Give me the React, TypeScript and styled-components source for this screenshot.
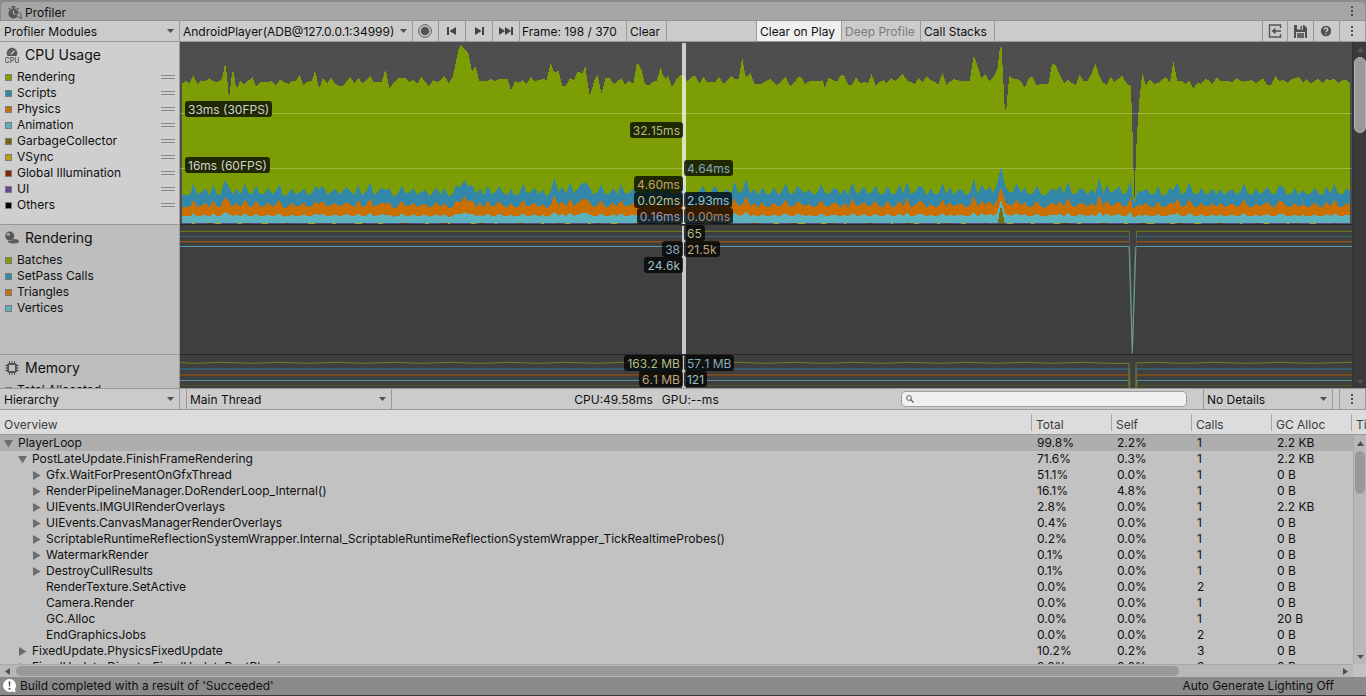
import React from "react";
import styled, { createGlobalStyle } from "styled-components";

const Page = createGlobalStyle`
  *, *::before, *::after { box-sizing: border-box; }
  body { margin: 0; background: #8a8a8a; overflow: hidden; }
  body, button, input, select, table {
    font-family: Inter, "Liberation Sans", sans-serif;
    font-size: 12px;
    line-height: 16px;
    color: #101010;
  }
`;

const Shell = styled.div`
  display: flex;
  flex-direction: column;
  height: 100vh;
  min-height: 480px;
  padding-top: 2px;
  background: #8a8a8a;
`;

const TabBar = styled.header`
  display: flex;
  align-items: center;
  justify-content: space-between;
  height: 19px;
  flex: none;
  margin: 0 1px;
  padding: 0 1px 0 7px;
  background: #a5a5a5;
  border-bottom: 1px solid #919191;
  border-radius: 4px 4px 0 0;
`;

const TabTitle = styled.h1`
  display: flex;
  align-items: center;
  gap: 3px;
  margin: 0;
  padding-top: 3px;
  font-size: 12px;
  font-weight: 400;
`;

const Toolbar = styled.div`
  display: flex;
  flex: none;
  height: 21px;
  background: #cbcbcb;
  border-bottom: 1px solid #999;
`;

const PickerFrame = styled.div<{ $width: number }>`
  display: grid;
  align-items: center;
  flex: none;
  width: ${(p) => p.$width}px;
  border-right: 1px solid #999;
  > * { grid-area: 1 / 1; }
  > svg { justify-self: end; margin-right: 5px; pointer-events: none; }
`;

const Select = styled.select`
  appearance: none;
  width: 100%;
  height: 20px;
  margin: 0;
  padding: 1px 0 0 4px;
  border: 0;
  border-radius: 0;
  background: transparent;
`;

const Picker = styled(Select)<{ $tight?: boolean }>`
  padding-left: ${(p) => (p.$tight ? 3 : 4)}px;
`;

const ToolButton = styled.button<{ $width: number; $on?: boolean; $icon?: boolean }>`
  display: flex;
  align-items: center;
  justify-content: ${(p) => (p.$icon ? "center" : "flex-start")};
  flex: none;
  width: ${(p) => p.$width}px;
  margin: 0;
  padding: ${(p) => (p.$icon ? "0 1px 0 0" : "1px 0 0 3px")};
  border: 0;
  border-right: 1px solid #999;
  background: ${(p) => (p.$on ? "#efefef" : "transparent")};
  white-space: nowrap;
  &:disabled { color: #7b7b7b; }
`;

const FrameCounter = styled.span`
  flex: none;
  width: 107px;
  padding: 3px 0 0 2px;
  border-right: 1px solid #999;
  white-space: nowrap;
`;

const Gap = styled.div<{ $width?: number }>`
  flex: ${(p) => (p.$width ? `0 0 ${p.$width}px` : "1 1 0")};
  border-right: 1px solid #999;
`;

const Modules = styled.main`
  display: flex;
  flex: none;
  height: 347px;
  overflow: hidden;
  background: #3f3f3f;
  border-bottom: 1px solid #999;
`;

const ModuleList = styled.div`
  flex: 1;
  min-width: 0;
`;

const ModuleRow = styled.section<{ $height: number }>`
  display: flex;
  height: ${(p) => p.$height}px;
`;

const Legend = styled.div<{ $selected?: boolean }>`
  flex: none;
  width: 180px;
  overflow: hidden;
  background: ${(p) => (p.$selected ? "#cfcfcf" : "#bebebe")};
  border-right: 1px solid #999;
  border-bottom: 1px solid #999;
`;

const LegendTitle = styled.h2`
  display: flex;
  align-items: center;
  gap: 6px;
  height: 27px;
  margin: 0;
  padding: 0 0 2px 5px;
  font-size: 14px;
  font-weight: 400;
`;

const LegendItems = styled.ul`
  margin: 0;
  padding: 0;
  list-style: none;
`;

const LegendItem = styled.li`
  display: flex;
  align-items: center;
  gap: 5px;
  height: 16px;
  padding: 0 4px 0 5px;
`;

const Swatch = styled.span<{ $color: string }>`
  width: 7px;
  height: 7px;
  background: ${(p) => p.$color};
  border: 1px solid #7a7a7a;
`;

const Handle = styled.span`
  width: 14px;
  height: 4px;
  margin-left: auto;
  border: solid #858585;
  border-width: 1px 0;
`;

const Chart = styled.div<{ $bright?: boolean }>`
  position: relative;
  flex: 1;
  min-width: 0;
  background: ${(p) => (p.$bright ? "#4e4e4e" : "#3f3f3f")};
  border-bottom: 1px solid #262626;
  > svg { display: block; width: 100%; height: 100%; }
`;

const ChartLabel = styled.span<{ $top: number }>`
  position: absolute;
  top: ${(p) => p.$top}px;
  padding: 1px 3px 0;
  border-radius: 3px;
  background: rgba(0, 0, 0, 0.75);
  line-height: 15px;
  font-kerning: none;
  white-space: nowrap;
`;

const GuideLabel = styled(ChartLabel)`
  left: 5px;
  color: #d2d2d2;
`;

const ValueLabel = styled(ChartLabel)<{ $side: "left" | "right"; $color: string }>`
  ${(p) => (p.$side === "left" ? "right: calc(57% + 1px);" : "left: 43%;")}
  color: ${(p) => p.$color};
`;

const VScroll = styled.div<{ $dark?: boolean }>`
  display: flex;
  flex-direction: column;
  align-items: center;
  flex: none;
  width: ${(p) => (p.$dark ? 14 : 13)}px;
  padding: ${(p) => (p.$dark ? "5px 0 4px 1px" : "6px 0 5px")};
  background: ${(p) => (p.$dark ? "#3a3a3a" : "#b8b8b8")};
  border-left: 1px solid ${(p) => (p.$dark ? "#333" : "#a8a8a8")};
  > svg:last-child { margin-top: auto; }
`;

const Thumb = styled.div<{ $length: number; $dark?: boolean }>`
  flex: none;
  width: ${(p) => (p.$dark ? 12 : 10)}px;
  height: ${(p) => p.$length}px;
  margin-top: 5px;
  border-radius: 6px;
  background: #999;
  border: ${(p) => (p.$dark ? "1px solid #b5b5b5" : "0")};
`;

const Stats = styled.div`
  display: flex;
  justify-content: center;
  gap: 9px;
  flex: 1;
  padding-top: 3px;
`;

const SearchBox = styled.label`
  display: flex;
  align-items: center;
  gap: 3px;
  width: 286px;
  height: 16px;
  margin: 2px 16px 0 0;
  padding: 0 4px;
  border: 1px solid #a0a0a0;
  border-radius: 4px;
  background: #f0f0f0;
`;

const SearchInput = styled.input`
  flex: 1;
  min-width: 0;
  height: 13px;
  padding: 0;
  border: 0;
  outline: 0;
  background: transparent;
`;

const TreeArea = styled.div`
  display: grid;
  grid-template: 25px minmax(0, 1fr) / minmax(0, 1fr) 13px;
  flex: 1;
  min-height: 0;
  overflow: hidden;
  background: #c2c2c2;
  > table { grid-area: 1 / 1 / 3 / 3; align-self: start; }
  > div { grid-area: 2 / 2; }
`;

const Table = styled.table`
  width: 100%;
  table-layout: fixed;
  border-collapse: separate;
  border-spacing: 0;
`;

const Col = styled.col<{ $width?: number }>`
  width: ${(p) => (p.$width ? `${p.$width}px` : "auto")};
`;

const HeadCell = styled.th`
  height: 25px;
  padding: 4px 0 3px;
  background: #dcdcdc;
  border-bottom: 1px solid #999;
  color: #3c3c3c;
  font-weight: 400;
  text-align: left;
  overflow: hidden;
`;

const HeadText = styled.div<{ $first?: boolean }>`
  height: 17px;
  padding-left: 4px;
  border-left: ${(p) => (p.$first ? "0" : "1px solid #a8a8a8")};
  line-height: 22px;
`;

const Row = styled.tr<{ $selected?: boolean }>`
  height: 16px;
  background: ${(p) => (p.$selected ? "#aeaeae" : "transparent")};
`;

const Cell = styled.td`
  height: 16px;
  padding: 0 0 0 6px;
  white-space: nowrap;
`;

const NameCell = styled.td<{ $level: number }>`
  height: 16px;
  padding: 0 0 0 ${(p) => 4 + p.$level * 14}px;
  white-space: nowrap;
`;

const NameLine = styled.div`
  display: flex;
  align-items: center;
  height: 16px;
`;

const Toggle = styled.button`
  display: flex;
  align-items: center;
  width: 14px;
  height: 14px;
  padding: 0;
  border: 0;
  background: transparent;
`;

const Leaf = styled.span`
  width: 14px;
`;

const HScroll = styled.div`
  display: flex;
  align-items: center;
  flex: none;
  height: 13px;
  margin-right: 13px;
  padding: 0 5px;
  background: #b8b8b8;
  border-top: 1px solid #a8a8a8;
`;

const HScrollRow = styled.div`
  flex: none;
  background: #c2c2c2;
`;

const HTrack = styled.div`
  flex: 1;
  margin: 0 5px 0 6px;
`;

const HThumb = styled.div`
  width: 88%;
  height: 10px;
  border-radius: 5px;
  background: #999;
`;

const StatusBar = styled.footer`
  display: flex;
  align-items: center;
  gap: 4px;
  flex: none;
  height: 19px;
  padding: 0 32px 0 3px;
  background: #8a8a8a;
  border-bottom: 1px solid #3a3a3a;
`;

const StatusRight = styled.span`
  margin-left: auto;
`;

/* ---------- icons ---------- */

const DownArrow = ({ color = "#505050" }: { color?: string }) => (
  <svg width="7" height="4" viewBox="0 0 7 4"><path d="M0 0h7L3.5 4z" fill={color} /></svg>
);
const UpArrow = ({ color = "#505050" }: { color?: string }) => (
  <svg width="7" height="5" viewBox="0 0 7 5"><path d="M0 5h7L3.5 0z" fill={color} /></svg>
);
const SideArrow = ({ flip }: { flip?: boolean }) => (
  <svg width="5" height="7" viewBox="0 0 5 7"><path d={flip ? "M5 0v7L0 3.5z" : "M0 0v7l5-3.5z"} fill="#505050" /></svg>
);
const Kebab = () => (
  <svg width="24" height="12" viewBox="0 0 24 12" fill="#4c4c4c">
    <rect x="11" y="1" width="2" height="2" /><rect x="11" y="5" width="2" height="2" /><rect x="11" y="9" width="2" height="2" />
  </svg>
);
const StopwatchIcon = () => (
  <svg width="14" height="14" viewBox="0 0 14 14" fill="none">
    <circle cx="5.5" cy="7.5" r="5" fill="#555" />
    <path d="M3.500 .7h4M5.500 .7v3M9 2l1.500 1.500M2 2L.8 3.200" stroke="#555" strokeWidth="1.500" />
    <path d="M5.500 4.200V7.500l1.800 1.400" stroke="#b0b0b0" strokeWidth="1.200" />
    <circle cx="11" cy="9" r="2.300" fill="#a5a5a5" stroke="#666" />
    <path d="M12.500 10.800l1.500 2" stroke="#555" strokeWidth="1.200" />
  </svg>
);
const CpuIcon = () => (
  <svg width="14" height="16" viewBox="0 0 14 16">
    <path d="M2.600 9A5.200 5.200 0 1 1 11.400 9z" fill="#555" />
    <path d="M6 7.400L9.500 3.600" stroke="#ddd" strokeWidth="1.300" />
    <path d="M4 4.900h.8M6.500 2.900h.8M3.500 6.900h.8" stroke="#bbb" />
    <text x="7" y="15.500" textAnchor="middle" fontSize="7" fontWeight="600" fill="#555">CPU</text>
  </svg>
);
const SphereIcon = () => (
  <svg width="14" height="13" viewBox="0 0 14 13">
    <ellipse cx="8.500" cy="10.300" rx="5.300" ry="2.200" fill="#5b5b5b" />
    <circle cx="4.700" cy="5" r="4.700" fill="#555" stroke="#bebebe" strokeWidth=".5" />
    <circle cx="3.400" cy="3.400" r="1.700" fill="#a5a5a5" />
  </svg>
);
const ChipIcon = () => (
  <svg width="14" height="14" viewBox="0 0 14 14" fill="none" stroke="#555">
    <rect x="3" y="3" width="8" height="8" rx="1" strokeWidth="2" />
    <path d="M4.500 0v2M7 0v2M9.500 0v2M4.500 12v2M7 12v2M9.500 12v2M0 4.500h2M0 7h2M0 9.500h2M12 4.500h2M12 7h2M12 9.500h2" />
  </svg>
);
const RecordIcon = () => (
  <svg width="14" height="14" viewBox="0 0 14 14"><circle cx="7" cy="7" r="6.300" fill="none" stroke="#555" /><circle cx="7" cy="7" r="4.300" fill="#555" /></svg>
);
const PrevIcon = () => (
  <svg width="10" height="8" viewBox="0 0 10 8" fill="#444"><path d="M0 0h2v8H0zM9 0v8L2.500 4z" /></svg>
);
const NextIcon = () => (
  <svg width="10" height="8" viewBox="0 0 10 8" fill="#444"><path d="M8 0h2v8H8zM1 0v8l6.500-4z" /></svg>
);
const LastIcon = () => (
  <svg width="14" height="8" viewBox="0 0 14 8" fill="#444"><path d="M12 0h2v8h-2zM0 0v8l6-4zM6 0v8l6-4z" /></svg>
);
const LoadIcon = () => (
  <svg width="14" height="14" viewBox="0 0 14 14" fill="none" stroke="#555">
    <path d="M12.500 4V1H1.500v12h11v-3" strokeWidth="1.400" />
    <path d="M5 7h8" strokeWidth="1.600" /><path d="M7.500 3.500v7L3.500 7z" fill="#555" stroke="none" />
  </svg>
);
const SaveIcon = () => (
  <svg width="13" height="13" viewBox="0 0 13 13">
    <path d="M0 0h10l3 3v10H0z" fill="#505050" /><path d="M3 0h6v4.500H3z" fill="#cbcbcb" /><path d="M6.500 1h1.500v3H6.500z" fill="#505050" />
    <path d="M2 7h9v6H2z" fill="#cbcbcb" /><path d="M3 8h7v5H3z" fill="#666" />
  </svg>
);
const HelpIcon = () => (
  <svg width="12" height="12" viewBox="0 0 12 12">
    <circle cx="6" cy="6" r="5.200" fill="#505050" />
    <path d="M4.200 4.700c0-2.300 3.600-2.300 3.600 0C7.800 5.900 6 5.900 6 7.300M6 8.300v1.200" fill="none" stroke="#cbcbcb" strokeWidth="1.300" />
  </svg>
);
const SearchIcon = () => (
  <svg width="8" height="8" viewBox="0 0 8 8" fill="none" stroke="#666"><circle cx="3" cy="3" r="2.400" /><path d="M4.800 4.800L7.600 7.600" strokeWidth="1.300" /></svg>
);
const Expander = ({ open }: { open?: boolean }) => (
  <svg width="9" height="9" viewBox="0 0 9 9"><path d={open ? "M0 1h9L4.500 8.500z" : "M1 0v9l7.500-4.500z"} fill="#6c6c6c" /></svg>
);
const InfoBubble = () => (
  <svg width="13" height="14" viewBox="0 0 13 14">
    <circle cx="6.500" cy="6.500" r="6.500" fill="#fff" />
    <path d="M8 12l4.500 1.500-.6-4z" fill="#fff" />
    <path d="M5.600 2.400h1.800l-.4 5.200h-1z" fill="#444" /><circle cx="6.500" cy="9.800" r="1" fill="#444" />
  </svg>
);

/* ---------- chart data: three recorded spans, each with its own start ---------- */

type Point = [number, number];
const spans = (...parts: [number, string][]): Point[] =>
  parts.flatMap(([start, text]) =>
    text.trim().split(/\s+/).map((pair): Point => {
      const [x, y] = pair.split(",").map(Number);
      return [x + start, y];
    })
  );

const renderingTrace = spans(
  [0, `6,131 18,123 28,129 40,108 52,132 64,121 75,125 88,114 99,124 112,125 124,119 130,100 133,78 138,78 146,164 149,164
    156,96 161,96 168,140 173,140 181,122 192,132 205,122 217,111 229,140 240,126 264,126 274,123 289,136 300,118 315,128
    325,131 336,123 347,123 359,105 370,137 380,125 395,124 400,110 404,95 408,100 413,130 418,143 429,114 442,129 453,113
    465,130 475,137 488,137 500,124 511,111 523,129 535,114 547,129 558,122 570,107 580,125 605,125 610,110 615,91 619,98
    628,146 640,130 656,114 675,114 688,125 700,120 712,131 724,110 735,125 746,138 760,121 770,126 782,120 794,108 806,130
    817,112 825,80 834,35 842,14 865,38 876,96 886,78 890,90 898,123 922,123 934,117 946,123 958,117 983,117 993,152
    1005,123 1016,129 1028,120 1040,132 1052,110 1064,123 1088,117 1100,120 1106,95 1112,69 1122,98 1135,92 1147,138 1157,138
    1170,114 1182,120 1192,96`],
  [1140, `56,96 68,100 76,76 80,110 88,161 92,160 103,120 113,105 124,161 128,150 136,114 150,114 160,131 170,126 184,114
    194,133 207,123 220,132 230,72 235,72 243,85 255,132 265,137 278,125 290,123 302,82 307,100 316,117 324,107 336,142
    348,120 362,105 372,108 382,125 396,108 406,108 418,131 430,111 442,126 466,126 477,110 489,131 500,123 513,108 524,116
    536,116 547,52 552,85 558,111 571,99 583,131 604,131 618,123 630,116 650,135 664,125 677,110 690,138 700,131 714,112
    724,112 736,132 748,123 782,123 788,120 794,144 806,114 820,120 831,125 843,105 853,108 866,137 876,135 888,111 902,131
    912,126 924,129 935,102 947,137 958,125 971,121 981,129 993,114 1006,123 1028,102 1042,122 1052,126 1064,132 1076,114
    1088,126 1100,108 1113,120 1124,126 1135,132`],
  [2280, `8,99 19,135 40,117 55,121 64,123 89,123 100,52 105,56 124,114 136,102 148,123 158,114 172,90 180,21 185,24 194,200
    198,218 202,170 208,108 220,117 232,117 243,123 254,143 266,117 272,111 278,111 290,137 300,132 325,132 336,72 346,75
    360,104 372,129 384,119 396,129 407,134 419,105 430,122 443,123 455,100 466,70 477,104 488,126 500,135 512,111 523,125
    536,116 547,106 559,129 572,138 576,220 583,485 586,404 590,300 598,180 607,99 618,137 630,117 643,132 655,128 677,111
    690,128 700,63 712,123 724,123 736,131 748,122 760,146 772,128 783,132 796,116 806,120 818,131 831,111 842,123 866,123
    877,128 889,114 901,122 914,125 935,120 948,129 969,115 982,135 993,135 1006,108 1018,123 1030,120 1042,128 1056,117
    1077,111 1090,128 1100,117 1113,130 1135,116 1147,129 1160,117 1170,120 1183,116 1195,130 1208,119 1218,120 1230,129`]
);

const scriptsTrace = spans(
  [0, `6,465 30,465 40,431 52,463 64,458 76,445 88,466 100,435 112,465 122,463 134,420 146,438 158,463 170,445 182,463
    194,431 208,463 216,462 229,438 240,461 252,462 264,443 278,463 290,448 298,433 312,470 325,461 336,445 348,464 358,458
    372,445 383,466 395,460 407,438 417,450 429,437 442,463 453,456 465,444 478,463 500,442 523,465 535,433 546,465 558,456
    571,426 582,465 606,443 618,450 629,445 640,470 652,463 665,437 677,460 688,457 700,443 712,465 735,449 748,468 770,443
    781,465 794,443 806,470 817,463 829,435 841,443 853,420 865,440 876,433 889,463 900,445 912,467 922,436 936,462 946,457
    958,437 970,460 982,465 994,447 1005,467 1017,463 1029,431 1041,461 1052,457 1064,444 1076,463 1088,450 1100,470
    1112,455 1123,413 1135,456 1147,440 1159,462 1170,426 1182,460`],
  [1140, `60,438 66,430 82,430 100,463 112,458 124,433 135,463 148,461 160,443 172,462 183,432 195,461 207,460 219,446 230,455
    250,463 262,445 275,465 290,440 305,465 320,445 335,463 350,460 363,455 372,430 380,462 406,458 419,452 430,438 440,461
    453,455 466,438 478,461 490,455 500,446 513,463 524,423 536,460 547,450 559,417 571,461 583,446 595,466 607,442 618,462
    630,463 642,443 655,464 665,455 677,431 690,464 701,458 713,438 735,460 748,448 760,465 772,458 783,432 796,460 806,463
    818,445 831,447 841,467 853,445 865,466 877,427 890,461 900,456 912,438 924,462 935,456 947,437 960,465 971,461 983,437
    995,463 1006,461 1019,435 1030,461 1041,424 1053,463 1065,455 1077,437 1089,443 1100,467 1113,446 1124,463 1136,460`],
  [2280, `8,431 19,463 30,442 42,464 53,452 66,447 77,465 90,458 101,414 113,463 125,434 136,455 149,438 160,459 172,430
    183,376 196,440 208,455 218,457 230,430 243,457 253,442 266,464 278,461 290,436 302,461 314,468 337,443 348,455 360,437
    372,462 384,424 396,461 408,463 419,443 431,450 444,463 455,445 466,461 478,414 490,461 501,433 513,460 525,450 537,438
    549,464 560,458 572,420 578,470 583,487 590,462 597,451 607,458 619,444 632,463 643,463 654,438 665,466 677,464 690,443
    700,452 712,427 725,463 737,456 748,425 760,460 772,464 784,443 796,462 807,460 818,446 830,463 842,446 854,466 870,450
    880,450 890,465 901,455 912,430 924,462 936,464 948,446 960,463 970,452 983,441 995,463 1006,461 1019,433 1030,442
    1041,464 1053,462 1064,444 1076,464 1088,449 1101,463 1112,461 1124,443 1136,461 1147,465 1160,441 1172,461 1183,432
    1195,461 1207,464 1219,445 1230,455`]
);

/* The lower layers rise and fall with the scripts layer, each more gently. */
const follow = (base: number, gain: number): Point[] =>
  scriptsTrace.map(([x, y]) => [x, Math.min(base + 3, base - (465 - y) * gain)]);
const physicsTrace = follow(502, 0.68);
const animationTrace = follow(529, 0.27);

const area = (points: Point[]) => `M6 549 ${points.map(([x, y]) => `L${x} ${y}`).join(" ")} L3510 549Z`;

const flecks = Array.from({ length: 150 }, (_, i) => ({
  x: 12 + i * 23.3,
  width: 6 + ((i * 37) % 17),
  color: i % 5 === 3 ? "#7a3418" : i % 3 === 1 ? "#b39b12" : "#5f4a80",
}));

const CpuChart = () => (
  <svg viewBox="0 6 3516 546" preserveAspectRatio="none" shapeRendering="crispEdges">
    <path d={area(renderingTrace)} fill="#7c9e04" />
    <path d={area(scriptsTrace)} fill="#3387a8" />
    <path d={area(physicsTrace)} fill="#ca6f02" />
    <path d={area(animationTrace)} fill="#5bb1bc" />
    <path d="M2448 530L2463 478L2478 530Z" fill="#5bb1bc" />
    <path d="M2454 549L2460 505H2466L2474 549Z" fill="#73700e" />
    <rect x="6" y="549" width="3504" height="3" fill="#5f4a80" />
    {flecks.map((f) => <rect key={f.x} x={f.x} y="549" width={f.width} height="3" fill={f.color} />)}
    <rect x="0" y="219" width="3516" height="3" fill="#fff" opacity=".25" />
    <rect x="0" y="384" width="3516" height="3" fill="#fff" opacity=".25" />
    <rect x="1506" y="9" width="12" height="543" fill="#fff" opacity=".72" />
  </svg>
);

const lineWithDip = (y: number, floor: number) => `M0 ${y}H2848.500V${floor}M2869.500 ${floor}V${y}H3516`;

const RenderingChart = () => (
  <svg viewBox="0 555 3516 387" preserveAspectRatio="none" fill="none" strokeWidth="3">
    <path d={lineWithDip(571.5, 600)} stroke="#474b34" />
    <path d={lineWithDip(574.5, 600)} stroke="#64761f" />
    <path d={lineWithDip(589.5, 610)} stroke="#34677b" />
    <path d={lineWithDip(604.5, 620)} stroke="#8a541c" />
    <path d={lineWithDip(607.5, 620)} stroke="#5f482f" />
    <path d="M0 619.500H2847L2857 940L2868 619.500H3516" stroke="#569ba2" />
    <path d="M2849 620L2857 930L2866 620" stroke="#7d9c72" strokeWidth="3" opacity=".7" />
    <rect x="1506" y="558" width="12" height="384" fill="#c8c8c8" />
  </svg>
);

const MemoryChart = () => (
  <svg viewBox="0 945 3516 99" preserveAspectRatio="none" fill="none" strokeWidth="3">
    <path d={lineWithDip(987, 1044)} stroke="#365c6e" strokeWidth="6" />
    <path d={lineWithDip(1005, 1044)} stroke="#75491f" strokeWidth="6" />
    <path d={lineWithDip(1021.5, 1044)} stroke="#4f929a" />
    <path d={lineWithDip(1036.5, 1044)} stroke="#57501f" />
    <path
      d={`M0 967 ${Array.from({ length: 33 }, (_, i) => `L${40 + i * 86} ${i % 2 ? 967 : 970}`).join(" ")} L2847 970V1044M2868 1044V969 L2930 967L3010 970L3100 967L3200 970L3300 967L3400 970L3516 967`}
      stroke="#6a8220"
    />
    <rect x="1506" y="948" width="12" height="96" fill="#c8c8c8" />
  </svg>
);

/* ---------- content ---------- */

const cpuLegend: [string, string][] = [
  ["Rendering", "#7c9e04"], ["Scripts", "#3387a8"], ["Physics", "#ca6f02"], ["Animation", "#5bb1bc"],
  ["GarbageCollector", "#73690c"], ["VSync", "#bfa004"], ["Global Illumination", "#8c2506"], ["UI", "#644790"], ["Others", "#000"],
];
const renderingLegend: [string, string][] = [
  ["Batches", "#7c9e04"], ["SetPass Calls", "#3387a8"], ["Triangles", "#ca6f02"], ["Vertices", "#5bb1bc"],
];
const memoryLegend: [string, string][] = [["Total Allocated", "#7c9e04"]];

const green = "#b2be84", blue = "#86a9ba", orange = "#c6a278", yellow = "#c9c082", cyan = "#9dc2c7", purple = "#a496b4", red = "#b48570";

type Sample = { name: string; level: number; state?: "open" | "closed"; total: string; self: string; calls: number; alloc: string };
const samples: Sample[] = [
  { name: "PlayerLoop", level: 0, state: "open", total: "99.8%", self: "2.2%", calls: 1, alloc: "2.2 KB" },
  { name: "PostLateUpdate.FinishFrameRendering", level: 1, state: "open", total: "71.6%", self: "0.3%", calls: 1, alloc: "2.2 KB" },
  { name: "Gfx.WaitForPresentOnGfxThread", level: 2, state: "closed", total: "51.1%", self: "0.0%", calls: 1, alloc: "0 B" },
  { name: "RenderPipelineManager.DoRenderLoop_Internal()", level: 2, state: "closed", total: "16.1%", self: "4.8%", calls: 1, alloc: "0 B" },
  { name: "UIEvents.IMGUIRenderOverlays", level: 2, state: "closed", total: "2.8%", self: "0.0%", calls: 1, alloc: "2.2 KB" },
  { name: "UIEvents.CanvasManagerRenderOverlays", level: 2, state: "closed", total: "0.4%", self: "0.0%", calls: 1, alloc: "0 B" },
  { name: "ScriptableRuntimeReflectionSystemWrapper.Internal_ScriptableRuntimeReflectionSystemWrapper_TickRealtimeProbes()", level: 2, state: "closed", total: "0.2%", self: "0.0%", calls: 1, alloc: "0 B" },
  { name: "WatermarkRender", level: 2, state: "closed", total: "0.1%", self: "0.0%", calls: 1, alloc: "0 B" },
  { name: "DestroyCullResults", level: 2, state: "closed", total: "0.1%", self: "0.0%", calls: 1, alloc: "0 B" },
  { name: "RenderTexture.SetActive", level: 2, total: "0.0%", self: "0.0%", calls: 2, alloc: "0 B" },
  { name: "Camera.Render", level: 2, total: "0.0%", self: "0.0%", calls: 1, alloc: "0 B" },
  { name: "GC.Alloc", level: 2, total: "0.0%", self: "0.0%", calls: 1, alloc: "20 B" },
  { name: "EndGraphicsJobs", level: 2, total: "0.0%", self: "0.0%", calls: 2, alloc: "0 B" },
  { name: "FixedUpdate.PhysicsFixedUpdate", level: 1, state: "closed", total: "10.2%", self: "0.2%", calls: 3, alloc: "0 B" },
  { name: "FixedUpdate.DirectorFixedUpdatePostPhysics", level: 1, state: "closed", total: "8.8%", self: "0.0%", calls: 3, alloc: "0 B" },
];

const Dropdown = ({ label, value, width, tight }: { label: string; value: string; width: number; tight?: boolean }) => (
  <PickerFrame $width={width}>
    <Picker aria-label={label} $tight={tight}><option>{value}</option></Picker>
    <DownArrow />
  </PickerFrame>
);

const LegendPanel = ({ title, icon, items, selected, sortable }: {
  title: string; icon: React.ReactNode; items: [string, string][]; selected?: boolean; sortable?: boolean;
}) => (
  <Legend $selected={selected}>
    <LegendTitle>{icon}{title}</LegendTitle>
    <LegendItems>
      {items.map(([name, color]) => (
        <LegendItem key={name}><Swatch $color={color} />{name}{sortable && <Handle />}</LegendItem>
      ))}
    </LegendItems>
  </Legend>
);

export default function App() {
  return (
    <>
      <Page />
      <Shell>
        <TabBar>
          <TabTitle><StopwatchIcon />Profiler</TabTitle>
          <Kebab />
        </TabBar>

        <Toolbar>
          <Dropdown label="Modules" value="Profiler Modules" width={180} />
          <Dropdown label="Target" value="AndroidPlayer(ADB@127.0.0.1:34999)" width={233} tight />
          <ToolButton $width={26} $icon aria-label="Record"><RecordIcon /></ToolButton>
          <ToolButton $width={27} $icon aria-label="Previous frame"><PrevIcon /></ToolButton>
          <ToolButton $width={27} $icon aria-label="Next frame"><NextIcon /></ToolButton>
          <ToolButton $width={27} $icon aria-label="Last frame"><LastIcon /></ToolButton>
          <FrameCounter>Frame: 198 / 370</FrameCounter>
          <ToolButton $width={40}>Clear</ToolButton>
          <Gap $width={90} />
          <ToolButton $width={85} $on>Clear on Play</ToolButton>
          <ToolButton $width={79} disabled>Deep Profile</ToolButton>
          <ToolButton $width={74}>Call Stacks</ToolButton>
          <Gap />
          <ToolButton $width={25} $icon aria-label="Load"><LoadIcon /></ToolButton>
          <ToolButton $width={26} $icon aria-label="Save"><SaveIcon /></ToolButton>
          <ToolButton $width={26} $icon aria-label="Help"><HelpIcon /></ToolButton>
          <ToolButton $width={26} $icon aria-label="Menu"><Kebab /></ToolButton>
        </Toolbar>

        <Modules>
          <ModuleList>
            <ModuleRow $height={183}>
              <LegendPanel title="CPU Usage" icon={<CpuIcon />} items={cpuLegend} selected sortable />
              <Chart $bright>
                <CpuChart />
                <GuideLabel $top={59}>33ms (30FPS)</GuideLabel>
                <GuideLabel $top={115}>16ms (60FPS)</GuideLabel>
                <ValueLabel $side="left" $top={80} $color={green}>32.15ms</ValueLabel>
                <ValueLabel $side="right" $top={118} $color={blue}>4.64ms</ValueLabel>
                <ValueLabel $side="left" $top={134} $color={orange}>4.60ms</ValueLabel>
                <ValueLabel $side="left" $top={150} $color={yellow}>0.02ms</ValueLabel>
                <ValueLabel $side="right" $top={150} $color={cyan}>2.93ms</ValueLabel>
                <ValueLabel $side="left" $top={166} $color={purple}>0.16ms</ValueLabel>
                <ValueLabel $side="right" $top={166} $color={red}>0.00ms</ValueLabel>
              </Chart>
            </ModuleRow>
            <ModuleRow $height={130}>
              <LegendPanel title="Rendering" icon={<SphereIcon />} items={renderingLegend} />
              <Chart>
                <RenderingChart />
                <ValueLabel $side="right" $top={0} $color={green}>65</ValueLabel>
                <ValueLabel $side="left" $top={16} $color={blue}>38</ValueLabel>
                <ValueLabel $side="right" $top={16} $color={orange}>21.5k</ValueLabel>
                <ValueLabel $side="left" $top={32} $color={cyan}>24.6k</ValueLabel>
              </Chart>
            </ModuleRow>
            <ModuleRow $height={34}>
              <LegendPanel title="Memory" icon={<ChipIcon />} items={memoryLegend} />
              <Chart>
                <MemoryChart />
                <ValueLabel $side="left" $top={0} $color={green}>163.2 MB</ValueLabel>
                <ValueLabel $side="right" $top={0} $color={blue}>57.1 MB</ValueLabel>
                <ValueLabel $side="left" $top={16} $color={orange}>6.1 MB</ValueLabel>
                <ValueLabel $side="right" $top={16} $color={cyan}>121</ValueLabel>
              </Chart>
            </ModuleRow>
          </ModuleList>
          <VScroll $dark>
            <UpArrow color="#555" />
            <Thumb $length={76} $dark />
            <DownArrow color="#555" />
          </VScroll>
        </Modules>

        <Toolbar>
          <Dropdown label="View" value="Hierarchy" width={180} />
          <Gap $width={7} />
          <Dropdown label="Thread" value="Main Thread" width={205} tight />
          <Stats><span>CPU:49.58ms</span><span>GPU:--ms</span></Stats>
          <SearchBox><SearchIcon /><SearchInput type="text" aria-label="Search" /></SearchBox>
          <Gap $width={1} />
          <Dropdown label="Details" value="No Details" width={129} tight />
          <Gap $width={7} />
          <ToolButton $width={26} $icon aria-label="Details menu"><Kebab /></ToolButton>
        </Toolbar>

        <TreeArea>
          <Table>
            <colgroup>
              <Col /><Col $width={80} /><Col $width={80} /><Col $width={80} /><Col $width={80} /><Col $width={15} />
            </colgroup>
            <thead>
              <tr>
                <HeadCell><HeadText $first>Overview</HeadText></HeadCell>
                {["Total", "Self", "Calls", "GC Alloc", "Ti"].map((name) => (
                  <HeadCell key={name}><HeadText>{name}</HeadText></HeadCell>
                ))}
              </tr>
            </thead>
            <tbody>
              {samples.map((s, i) => (
                <Row key={s.name} $selected={i === 0}>
                  <NameCell $level={s.level}>
                    <NameLine>
                      {s.state
                        ? <Toggle aria-label={`Toggle ${s.name}`} aria-expanded={s.state === "open"}><Expander open={s.state === "open"} /></Toggle>
                        : <Leaf />}
                      {s.name}
                    </NameLine>
                  </NameCell>
                  <Cell>{s.total}</Cell>
                  <Cell>{s.self}</Cell>
                  <Cell>{s.calls}</Cell>
                  <Cell>{s.alloc}</Cell>
                  <Cell />
                </Row>
              ))}
            </tbody>
          </Table>
          <VScroll>
            <UpArrow />
            <Thumb $length={43} />
            <DownArrow />
          </VScroll>
        </TreeArea>

        <HScrollRow>
          <HScroll>
            <SideArrow flip />
            <HTrack><HThumb /></HTrack>
            <SideArrow />
          </HScroll>
        </HScrollRow>

        <StatusBar>
          <InfoBubble />
          Build completed with a result of 'Succeeded'
          <StatusRight>Auto Generate Lighting Off</StatusRight>
        </StatusBar>
      </Shell>
    </>
  );
}
